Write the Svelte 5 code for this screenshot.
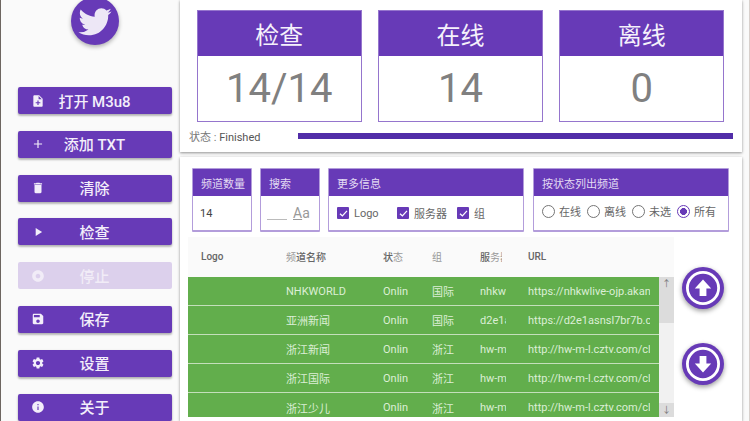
<script>
  const menu = [
    { label: '打开 M3u8', icon: 'file' },
    { label: '添加 TXT', icon: 'plus' },
    { label: '清除', icon: 'trash' },
    { label: '检查', icon: 'play' },
    { label: '停止', icon: 'stop', off: true },
    { label: '保存', icon: 'save' },
    { label: '设置', icon: 'gear' },
    { label: '关于', icon: 'info' }
  ]
  const paths = {
    file: 'M14 2H6c-1.1 0-2 .9-2 2v16c0 1.1.9 2 2 2h12c1.1 0 2-.9 2-2V8l-6-6zm-1 7V3.5L18.5 9H13zm3 7h-3v3h-2v-3H8v-2h3v-3h2v3h3v2z',
    plus: 'M19 13h-6v6h-2v-6H5v-2h6V5h2v6h6v2z',
    trash: 'M6 19c0 1.1.9 2 2 2h8c1.1 0 2-.9 2-2V7H6v12zM19 4h-3.5l-1-1h-5l-1 1H5v2h14V4z',
    play: 'M8 5v14l11-7z',
    stop: 'M12 2C6.48 2 2 6.48 2 12s4.48 10 10 10 10-4.48 10-10S17.52 2 12 2zm0 14c-2.21 0-4-1.79-4-4s1.79-4 4-4 4 1.79 4 4-1.79 4-4 4z',
    save: 'M17 3H5c-1.11 0-2 .9-2 2v14c0 1.1.89 2 2 2h14c1.1 0 2-.9 2-2V7l-4-4zm-5 16c-1.66 0-3-1.34-3-3s1.34-3 3-3 3 1.34 3 3-1.34 3-3 3zm3-10H5V5h10v4z',
    gear: 'M19.14 12.94c.04-.3.06-.61.06-.94 0-.32-.02-.64-.07-.94l2.03-1.58c.18-.14.23-.41.12-.61l-1.92-3.32c-.12-.22-.37-.29-.59-.22l-2.39.96c-.5-.38-1.03-.7-1.62-.94l-.36-2.54c-.04-.24-.24-.41-.48-.41h-3.84c-.24 0-.43.17-.47.41l-.36 2.54c-.59.24-1.13.57-1.62.94l-2.39-.96c-.22-.08-.47 0-.59.22L2.74 8.87c-.12.21-.08.47.12.61l2.03 1.58c-.05.3-.09.63-.09.94s.02.64.07.94l-2.03 1.58c-.18.14-.23.41-.12.61l1.92 3.32c.12.22.37.29.59.22l2.39-.96c.5.38 1.03.7 1.62.94l.36 2.54c.05.24.24.41.48.41h3.84c.24 0 .44-.17.47-.41l.36-2.54c.59-.24 1.13-.56 1.62-.94l2.39.96c.22.08.47 0 .59-.22l1.92-3.32c.12-.22.07-.47-.12-.61l-2.01-1.58zM12 15.6c-1.98 0-3.6-1.62-3.6-3.6s1.62-3.6 3.6-3.6 3.6 1.62 3.6 3.6-1.62 3.6-3.6 3.6z',
    info: 'M12 2C6.48 2 2 6.48 2 12s4.48 10 10 10 10-4.48 10-10S17.52 2 12 2zm1 15h-2v-6h2v6zm0-8h-2V7h2v2z'
  }
  const stats = [
    { title: '检查', value: '14/14' },
    { title: '在线', value: '14' },
    { title: '离线', value: '0' }
  ]
  const rows = [
    ['NHKWORLD', '国际', 'nhkw', 'https://nhkwlive-ojp.akan'],
    ['亚洲新闻', '国际', 'd2e1a', 'https://d2e1asnsl7br7b.c'],
    ['浙江新闻', '浙江', 'hw-m', 'http://hw-m-l.cztv.com/cl'],
    ['浙江国际', '浙江', 'hw-m', 'http://hw-m-l.cztv.com/cl'],
    ['浙江少儿', '浙江', 'hw-m', 'http://hw-m-l.cztv.com/cl']
  ]
  const radios = ['在线', '离线', '未选', '所有']
  let filter = $state('所有')
</script>

<div class="page">
  <aside class="side">
    <div class="logo">
      <svg viewBox="0 0 24 24" width="38" height="38"><path fill="#ede7f6" d="M22.46 6c-.77.35-1.6.58-2.46.69.88-.53 1.56-1.37 1.88-2.38-.83.5-1.75.85-2.72 1.05C18.37 4.5 17.26 4 16 4c-2.35 0-4.27 1.92-4.27 4.29 0 .34.04.67.11.98C8.28 9.09 5.11 7.38 3 4.79c-.37.63-.58 1.37-.58 2.15 0 1.49.75 2.81 1.91 3.56-.71 0-1.37-.2-1.95-.5v.03c0 2.08 1.48 3.82 3.44 4.21a4.22 4.22 0 0 1-1.93.07 4.28 4.28 0 0 0 4 2.98 8.521 8.521 0 0 1-5.33 1.84c-.34 0-.68-.02-1.02-.06C3.44 20.29 5.7 21 8.12 21 16 21 20.33 14.46 20.33 8.79c0-.19 0-.37-.01-.56.84-.6 1.56-1.36 2.14-2.23z"/></svg>
    </div>
    <nav class="menu">
      {#each menu as item}
        <button class="menu-btn" class:off={item.off}>
          <svg class="menu-icon" viewBox="0 0 24 24" width="14" height="14"><path fill="currentColor" d={paths[item.icon]}/></svg>
          <span>{item.label}</span>
        </button>
      {/each}
    </nav>
  </aside>

  <main class="content">
    <section class="panel top">
      <div class="stats">
        {#each stats as s}
          <div class="stat">
            <div class="stat-title">{s.title}</div>
            <div class="stat-value">{s.value}</div>
          </div>
        {/each}
      </div>
      <div class="status">
        <span class="status-text"><span class="dim">状态 :</span> Finished</span>
        <div class="progress"></div>
      </div>
    </section>

    <section class="panel bottom">
      <div class="filters">
        <div class="box count">
          <div class="box-title">频道数量</div>
          <div class="box-body">14</div>
        </div>
        <div class="box search">
          <div class="box-title">搜索</div>
          <div class="box-body search-body">
            <span class="search-line"></span>
            <span class="case"><u>A</u>a</span>
          </div>
        </div>
        <div class="box more">
          <div class="box-title">更多信息</div>
          <div class="box-body checks">
            <label class="check"><span class="tick"><svg viewBox="0 0 12 12" width="11" height="11"><path d="M2.2 6.2 4.8 8.6 9.8 3.2" fill="none" stroke="#fff" stroke-width="1.4"/></svg></span><span class="logo-label">Logo</span></label>
            <label class="check"><span class="tick"><svg viewBox="0 0 12 12" width="11" height="11"><path d="M2.2 6.2 4.8 8.6 9.8 3.2" fill="none" stroke="#fff" stroke-width="1.4"/></svg></span>服务器</label>
            <label class="check"><span class="tick"><svg viewBox="0 0 12 12" width="11" height="11"><path d="M2.2 6.2 4.8 8.6 9.8 3.2" fill="none" stroke="#fff" stroke-width="1.4"/></svg></span>组</label>
          </div>
        </div>
        <div class="box state">
          <div class="box-title">按状态列出频道</div>
          <div class="box-body radios">
            {#each radios as r}
              <button class="radio" class:on={filter === r} onclick={() => (filter = r)}>
                <span class="ring"></span>{r}
              </button>
            {/each}
          </div>
        </div>
      </div>

      <div class="table-area">
        <div class="table">
          <div class="thead">
            <span class="c-logo">Logo</span>
            <span class="c-name"><i>频</i>道名称</span>
            <span class="c-status">状<i>态</i></span>
            <span class="c-group"><i>组</i></span>
            <span class="c-server">服<i>务器</i></span>
            <span class="c-url">URL</span>
          </div>
          <div class="tbody">
            <div class="rows">
              {#each rows as row}
                <div class="row">
                  <span class="c-logo"></span>
                  <span class="c-name">{row[0]}</span>
                  <span class="c-status">Online</span>
                  <span class="c-group">{row[1]}</span>
                  <span class="c-server">{row[2]}</span>
                  <span class="c-url">{row[3]}</span>
                </div>
              {/each}
            </div>
            <div class="scrollbar">
              <span class="arrow">↑</span>
              <span class="thumb"></span>
              <span class="arrow down">↓</span>
            </div>
          </div>
        </div>
        <div class="fabs">
          <button class="fab" aria-label="up">
            <svg viewBox="0 0 42 42" width="42" height="42"><circle cx="21" cy="21" r="15.6" fill="none" stroke="#fff" stroke-width="2.8"/><path fill="#fff" d="M21 12.5 12.8 21.5h4.8v7.5h6.8v-7.5h4.8z"/></svg>
          </button>
          <button class="fab" aria-label="down">
            <svg viewBox="0 0 42 42" width="42" height="42"><circle cx="21" cy="21" r="15.6" fill="none" stroke="#fff" stroke-width="2.8"/><path fill="#fff" d="M21 29.5 12.8 20.5h4.8V13h6.8v7.5h4.8z"/></svg>
          </button>
        </div>
      </div>
    </section>
  </main>
</div>

<style>
  :global(body) {
    margin: 0;
    background: #fafafa;
    font-family: Roboto, "Noto Sans CJK SC", sans-serif;
    overflow: hidden;
  }

  button {
    font-family: inherit;
    border: none;
    padding: 0;
    background: none;
  }

  .page {
    width: 750px;
    height: 421px;
    display: flex;
    overflow: hidden;
    box-sizing: border-box;
    border-left: 1px solid #6d6660;
    border-right: 1px solid #d8d0cc;
    background: #fafafa;
  }

  .side {
    width: 177px;
    flex: none;
    display: flex;
    flex-direction: column;
    align-items: center;
    box-sizing: border-box;
    padding-left: 16px;
    padding-right: 6px;
  }

  .logo {
    width: 48px;
    height: 48px;
    margin-top: -3px;
    flex: none;
    border-radius: 50%;
    background: #673ab7;
    display: flex;
    align-items: center;
    justify-content: center;
    box-shadow: 0 2px 4px rgba(0, 0, 0, 0.3);
  }

  .menu {
    margin-top: 42px;
    display: flex;
    flex-direction: column;
    gap: 16.8px;
    width: 154px;
  }

  .menu-btn {
    position: relative;
    height: 27px;
    width: 154px;
    flex: none;
    background: #673ab7;
    color: #f3eefa;
    border-radius: 2px;
    font-size: 15px;
    font-weight: 500;
    box-shadow: 0 2px 2px rgba(0, 0, 0, 0.2), 0 1px 3px rgba(0, 0, 0, 0.15);
    display: flex;
    align-items: center;
    justify-content: center;
  }

  .menu-btn span {
    margin-top: -1px;
  }

  .menu-btn.off {
    background: #dcd0ec;
    box-shadow: none;
    color: #f1ecf7;
  }

  .menu-icon {
    position: absolute;
    left: 13px;
    top: 6.5px;
  }

  .content {
    flex: 1;
    min-width: 0;
    display: flex;
    flex-direction: column;
    gap: 5px;
    padding-left: 2px;
    padding-right: 7px;
  }

  .panel {
    background: #fff;
    box-shadow: 0 1px 3px rgba(0, 0, 0, 0.3), 0 1px 2px rgba(0, 0, 0, 0.15);
    box-sizing: border-box;
  }

  .top {
    height: 152px;
    flex: none;
    padding: 10px 9px 0 9px;
  }

  .stats {
    display: flex;
    gap: 16.6px;
    padding-left: 8px;
  }

  .stat {
    width: 164.6px;
    height: 112px;
    box-sizing: border-box;
    border: 1px solid #9575cd;
    display: flex;
    flex-direction: column;
  }

  .stat-title {
    height: 45px;
    flex: none;
    background: #673ab7;
    color: #f5f1fb;
    font-size: 24px;
    display: flex;
    align-items: center;
    justify-content: center;
  }

  .stat-value {
    flex: 1;
    color: #808080;
    font-size: 40px;
    display: flex;
    align-items: center;
    justify-content: center;
  }

  .status {
    display: flex;
    align-items: center;
    margin-top: 6px;
    font-size: 11px;
    color: #555;
  }

  .status-text {
    width: 109px;
    flex: none;
  }

  .dim {
    color: #777;
  }

  .progress {
    flex: 1;
    height: 6px;
    background: #512da8;
  }

  .bottom {
    flex: 1;
    min-height: 0;
    padding: 11px 0 0 8px;
    overflow: hidden;
  }

  .filters {
    display: flex;
    gap: 8px;
    padding-left: 4px;
  }

  .box {
    height: 64px;
    box-sizing: border-box;
    border: 1px solid #b39ddb;
    border-bottom-width: 2px;
    border-radius: 1px;
    display: flex;
    flex-direction: column;
    flex: none;
  }

  .count { width: 60px; }
  .search { width: 60px; }
  .more { width: 196px; }
  .state { width: 196px; margin-left: 1px; }

  .box-title {
    height: 27px;
    flex: none;
    background: #673ab7;
    color: #e3daf3;
    font-size: 11px;
    display: flex;
    align-items: center;
    padding-left: 8px;
  }

  .box-body {
    flex: 1;
    display: flex;
    align-items: center;
    font-size: 11px;
    color: #666;
  }

  .count .box-body {
    padding-left: 7px;
    color: #444;
  }

  .search-body {
    padding-left: 6px;
    gap: 6px;
  }

  .search-line {
    width: 20px;
    height: 1px;
    background: #bbb;
    margin-top: 12px;
  }

  .case {
    color: #999;
    font-size: 14px;
  }

  .checks {
    padding-left: 8px;
    gap: 10px;
  }

  .check {
    display: flex;
    align-items: center;
    gap: 5px;
  }

  .logo-label {
    width: 33px;
  }

  .tick {
    width: 12px;
    height: 12px;
    background: #673ab7;
    border-radius: 1px;
    display: flex;
    align-items: center;
    justify-content: center;
  }

  .radios {
    padding-left: 8px;
    gap: 6px;
    align-items: flex-start;
    padding-top: 7px;
  }

  .radio {
    display: flex;
    align-items: center;
    gap: 4px;
    font-size: 11px;
    color: #666;
  }

  .ring {
    width: 13px;
    height: 13px;
    box-sizing: border-box;
    border: 1.5px solid #757575;
    border-radius: 50%;
  }

  .on .ring {
    border-color: #673ab7;
    background: radial-gradient(circle, #673ab7 0 3.2px, #fff 3.7px);
  }

  .table-area {
    display: flex;
    margin-top: 5px;
  }

  .table {
    width: 486px;
    flex: none;
    background: #fafafa;
  }

  .thead {
    height: 40px;
    box-sizing: border-box;
    padding-bottom: 2px;
    display: flex;
    align-items: center;
    font-size: 10px;
    color: #666;
    font-weight: 500;
    background: #fafafa;
  }

  .thead i {
    font-style: normal;
    font-weight: 400;
    color: #999;
  }

  .thead span,
  .row span {
    flex: none;
    box-sizing: border-box;
    overflow: hidden;
    white-space: nowrap;
    display: block;
  }

  .thead .c-logo { width: 98px; padding-left: 13px; }
  .row .c-logo { width: 98px; }
  .thead .c-name,
  .row .c-name { width: 97px; }
  .thead .c-status,
  .row .c-status { width: 25px; margin-right: 24px; }
  .thead .c-group,
  .row .c-group { width: 48px; }
  .thead .c-server { width: 22px; margin-right: 26px; }
  .row .c-server { width: 26px; margin-right: 22px; }
  .thead .c-url,
  .row .c-url { width: 122px; }

  .tbody {
    display: flex;
    height: 140px;
    overflow: hidden;
  }

  .rows {
    width: 471px;
    flex: none;
    height: 140px;
    overflow: hidden;
  }

  .row {
    height: 29px;
    box-sizing: border-box;
    display: flex;
    align-items: center;
    background: #62ae4c;
    color: #dcefd6;
    font-size: 11px;
    border-bottom: 1px solid #c4dfbb;
  }

  .row:last-child {
    border-bottom: none;
  }

  .scrollbar {
    width: 15px;
    flex: none;
    background: #f1f1f1;
    display: flex;
    flex-direction: column;
    height: 140px;
    color: #777;
    font-size: 9px;
    text-align: center;
  }

  .arrow {
    height: 14px;
    line-height: 14px;
    background: #dcdcdc;
  }

  .thumb {
    height: 32px;
    background: #dcdcdc;
  }

  .arrow.down {
    margin-top: auto;
  }

  .fabs {
    flex: 1;
    display: flex;
    flex-direction: column;
    align-items: center;
    gap: 34px;
    padding-top: 30px;
    padding-right: 10px;
  }

  .fab {
    width: 42px;
    height: 42px;
    flex: none;
    border-radius: 50%;
    background: #673ab7;
    box-shadow: 0 2px 5px rgba(0, 0, 0, 0.4);
    display: flex;
    align-items: center;
    justify-content: center;
  }
</style>
